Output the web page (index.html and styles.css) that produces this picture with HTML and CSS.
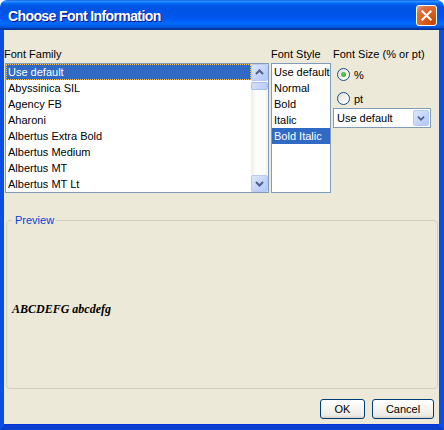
FILE: index.html
```html
<!DOCTYPE html>
<html>
<head>
<meta charset="utf-8">
<link rel="stylesheet" href="styles.css">
</head>
<body>
<div class="window">
  <div class="titlebar">
    <span class="title">Choose Font Information</span>
    <span class="close"><svg width="21" height="21" viewBox="0 0 21 21"><path d="M6 6 L15 15 M15 6 L6 15" stroke="#fff" stroke-width="2.2" stroke-linecap="square"/></svg></span>
  </div>
  <div class="frame">
    <div class="pickers">
      <div class="col">
        <div class="label">Font Family</div>
        <div class="listbox family">
          <ul class="items">
            <li class="sel focus">Use default</li>
            <li>Abyssinica SIL</li>
            <li>Agency FB</li>
            <li>Aharoni</li>
            <li>Albertus Extra Bold</li>
            <li>Albertus Medium</li>
            <li>Albertus MT</li>
            <li>Albertus MT Lt</li>
          </ul>
          <div class="vscroll">
            <div class="sbtn"><svg width="15" height="15" viewBox="0 0 15 15"><path d="M4 9 L7.5 5.5 L11 9" fill="none" stroke="#4d6185" stroke-width="2"/></svg></div>
            <div class="thumb"></div>
            <div class="track"></div>
            <div class="sbtn"><svg width="15" height="15" viewBox="0 0 15 15"><path d="M4 6 L7.5 9.5 L11 6" fill="none" stroke="#4d6185" stroke-width="2"/></svg></div>
          </div>
        </div>
      </div>
      <div class="col">
        <div class="label">Font Style</div>
        <div class="listbox styles">
          <ul class="items">
            <li>Use default</li>
            <li>Normal</li>
            <li>Bold</li>
            <li>Italic</li>
            <li class="sel">Bold Italic</li>
          </ul>
        </div>
      </div>
      <div class="col size">
        <div class="label">Font Size (% or pt)</div>
        <div class="radio first"><span class="circle checked"><span class="dot"></span></span><span>%</span></div>
        <div class="radio second"><span class="circle"></span><span>pt</span></div>
        <div class="combo">
          <span class="ctext">Use default</span>
          <span class="cbtn"><svg width="16" height="16" viewBox="0 0 16 16"><path d="M4.5 6.5 L8 10 L11.5 6.5" fill="none" stroke="#4d6185" stroke-width="2"/></svg></span>
        </div>
      </div>
    </div>
    <fieldset class="preview">
      <legend>Preview</legend>
      <div class="sample">ABCDEFG abcdefg</div>
    </fieldset>
    <div class="actions">
      <button class="btn ok">OK</button>
      <button class="btn cancel">Cancel</button>
    </div>
  </div>
</div>
</body>
</html>
```
FILE: styles.css
```css
html, body {
  margin: 0;
  padding: 0;
  background: #ffffff;
}
body {
  font-family: "Liberation Sans", Arial, sans-serif;
  font-size: 11px;
  color: #000;
}
.window {
  width: 444px;
  height: 430px;
  display: flex;
  flex-direction: column;
}
.titlebar {
  height: 30px;
  flex: none;
  border-radius: 7px 7px 0 0;
  background: linear-gradient(to bottom, #0058ee 0%, #3593ff 4%, #288eff 6%, #127dff 8%, #036ffc 10%, #0262ee 14%, #0057e5 20%, #0054e3 24%, #0055eb 56%, #005bf5 66%, #026afe 76%, #0062ef 86%, #0052d6 92%, #0040ab 94%, #003092 100%);
  display: flex;
  align-items: center;
  padding: 0 7px 0 8px;
  box-sizing: border-box;
}
.title {
  flex: 1;
  color: #fff;
  font-weight: bold;
  font-size: 14px;
  letter-spacing: -0.6px;
  text-shadow: 1px 1px #0f1089;
  padding-top: 1px;
}
.close {
  width: 21px;
  height: 21px;
  box-sizing: border-box;
  border: 1px solid #fff;
  border-radius: 3px;
  background: radial-gradient(circle at 85% 85%, #cc4600 0%, #dc6527 55%, #d9714a 75%, #eaa58a 100%);
  background-color: #e0582a;
  display: flex;
  align-items: center;
  justify-content: center;
  margin-top: 1px;
}
.close svg {
  display: block;
  width: 19px;
  height: 19px;
}
.frame {
  flex: 1;
  background: #ece9d8;
  border-left: 4px solid #0a4ee4;
  border-right: 5px solid #0a4ee4;
  border-bottom: 5px solid #0a3fd0;
  box-shadow: inset 0 -1px #0831d9;
  display: flex;
  flex-direction: column;
  padding: 17px 0 6px 0;
}
.pickers {
  display: grid;
  grid-template-columns: 264px 60px 1fr;
  column-gap: 2px;
  padding-left: 1px;
}
.label {
  line-height: 14px;
  height: 14px;
  margin-bottom: 2px;
  white-space: nowrap;
}
.pickers .col:first-child .label {
  margin-left: -1px;
}
.listbox {
  height: 130px;
  box-sizing: border-box;
  border: 1px solid #7f9db9;
  background: #fff;
  display: flex;
}
.items {
  list-style: none;
  margin: 0;
  padding: 0;
  flex: 1;
}
.items li {
  height: 16px;
  line-height: 16px;
  padding-left: 2px;
  white-space: nowrap;
  overflow: hidden;
}
.items li.sel {
  background: #316ac5;
  color: #fff;
}
.items li.focus {
  outline: 1px dotted #f3c66a;
  outline-offset: -1px;
}
.vscroll {
  width: 17px;
  display: flex;
  flex-direction: column;
  background: linear-gradient(to right, #eeede5, #fefefb 30%, #fdfdf9 80%, #f0efe8);
}
.sbtn {
  height: 17px;
  box-sizing: border-box;
  border: 1px solid #b9c9ef;
  border-radius: 2px;
  background: linear-gradient(135deg, #dce7fe, #c2d3fc 60%, #b3c7f8);
  display: flex;
  align-items: center;
  justify-content: center;
}
.sbtn svg { display: block; }
.thumb {
  height: 8px;
  margin-top: 1px;
  box-sizing: border-box;
  border: 1px solid #a7bdec;
  border-radius: 2px;
  background: linear-gradient(to right, #d2defb, #c6d6fc 50%, #bccefa);
}
.track {
  flex: 1;
}
.size .radio {
  display: flex;
  align-items: center;
  gap: 4px;
  height: 13px;
  padding-left: 4px;
}
.size .radio.first { margin-top: 7px; }
.size .radio.second { margin-top: 11px; }
.circle {
  width: 13px;
  height: 13px;
  box-sizing: border-box;
  border: 1px solid #1c5180;
  border-radius: 50%;
  background: linear-gradient(135deg, #dcdcd7, #f6f6f4 60%, #ffffff);
  display: flex;
  align-items: center;
  justify-content: center;
}
.dot {
  width: 5px;
  height: 5px;
  border-radius: 50%;
  background: radial-gradient(circle at 40% 40%, #5ed15e, #21a121);
}
.combo {
  margin-top: 3px;
  width: 98px;
  height: 20px;
  box-sizing: border-box;
  border: 1px solid #7f9db9;
  background: #fff;
  display: flex;
  align-items: center;
  padding: 1px;
}
.ctext {
  flex: 1;
  padding-left: 2px;
}
.cbtn {
  width: 16px;
  height: 16px;
  box-sizing: border-box;
  border: 1px solid #b9c9ef;
  border-radius: 2px;
  background: linear-gradient(135deg, #dce7fe, #c2d3fc 60%, #b3c7f8);
  display: flex;
  align-items: center;
  justify-content: center;
}
.cbtn svg { display: block; width: 14px; height: 14px; }
.preview {
  flex: 1;
  margin: 21px 1px 0 2px;
  padding: 0 5px 0 5px;
  border: 1px solid #d0d0bf;
  border-radius: 4px;
  min-width: 0;
  display: flex;
  align-items: center;
}
.preview legend {
  color: #0046d5;
  padding: 0 2px 0 3px;
  margin-left: 0;
  line-height: 13px;
  font-size: 11px;
}
.sample {
  font-family: "Liberation Serif", "Times New Roman", serif;
  font-weight: bold;
  font-style: italic;
  font-size: 12px;
  margin-top: 3px;
}
.actions {
  display: flex;
  justify-content: flex-end;
  gap: 7px;
  margin-top: 10px;
  padding-right: 5px;
}
.btn {
  height: 20px;
  box-sizing: border-box;
  border: 1px solid #003c74;
  border-radius: 3px;
  background: linear-gradient(to bottom, #ffffff 0%, #f5f4ef 50%, #ecebe6 85%, #d6d0c5 100%);
  font-family: "Liberation Sans", Arial, sans-serif;
  font-size: 11px;
  color: #000;
  padding: 0;
  margin: 0;
}
.btn.ok { width: 45px; }
.btn.cancel { width: 62px; }
```
